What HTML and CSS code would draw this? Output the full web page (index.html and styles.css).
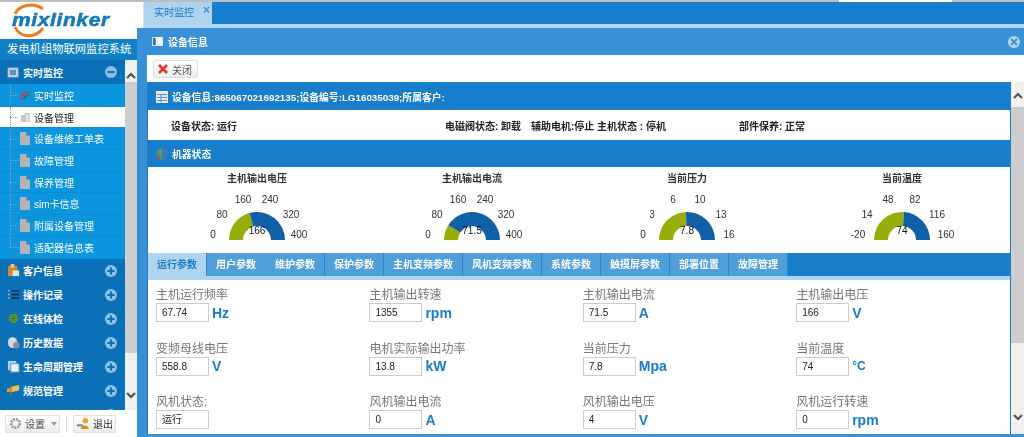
FILE: index.html
```html
<!DOCTYPE html>
<html lang="zh">
<head>
<meta charset="utf-8">
<title>发电机组物联网监控系统</title>
<link rel="stylesheet" href="styles.css">
</head>
<body>
<svg class="defs" width="0" height="0">
  <symbol id="doc" viewBox="0 0 10 13"><path d="M0 0h6.5L10 3.5V13H0z" fill="#b4b4b4"/><path d="M6.5 0L10 3.5H6.5z" fill="#2a7fc0"/></symbol>
  <symbol id="plus" viewBox="0 0 12 12"><circle cx="6" cy="6" r="6" fill="#8cc0e4"/><path d="M2.5 6h7M6 2.5v7" stroke="#0a6fb5" stroke-width="2"/></symbol>
  <symbol id="up" viewBox="0 0 10 7"><path d="M1 6l4-4 4 4" fill="none" stroke="#555" stroke-width="2.2"/></symbol>
  <symbol id="down" viewBox="0 0 10 7"><path d="M1 1l4 4 4-4" fill="none" stroke="#555" stroke-width="2.2"/></symbol>
</svg>
<div class="topline"></div>
<div class="app">
  <aside class="side">
    <div class="logo">
      <svg class="logo-ring" viewBox="0 0 60 37"><path d="M15 12C19 3 33 0 43 7M15 25C20 36 35 37 43 26" fill="none" stroke="#ee7d1e" stroke-width="3"/></svg>
      <span class="logo-text">mixlinker</span>
    </div>
    <div class="sys-title">发电机组物联网监控系统</div>
    <div class="side-mid">
      <nav class="menu">
        <div class="mhead"><svg class="micon" viewBox="0 0 14 14"><rect x="1" y="2" width="11" height="10" fill="#dfe8f0" stroke="#7d99b5"/><rect x="3" y="4" width="7" height="6" fill="#5b8fc0"/></svg><span class="mtext">实时监控</span><svg class="mbtn" viewBox="0 0 12 12"><circle cx="6" cy="6" r="6" fill="#8cc0e4"/><path d="M2.5 6h7" stroke="#0a6fb5" stroke-width="2"/></svg></div>
        <ul class="sub">
          <li class="it"><svg class="ii" viewBox="0 0 12 12"><path d="M1 11C1 5 5 2 11 2" fill="none" stroke="#d33" stroke-width="2"/><path d="M5 11C5 8 7 6 11 6" fill="none" stroke="#2c8f3c" stroke-width="2"/><path d="M3 11L9 5" stroke="#2a5fb0" stroke-width="1.5"/></svg>实时监控</li>
          <li class="it on"><svg class="ii" viewBox="0 0 12 12"><rect x="1" y="3" width="5" height="8" fill="#c4c4c4"/><rect x="6" y="1" width="5" height="10" fill="#e2e2e2" stroke="#999" stroke-width=".6"/></svg>设备管理</li>
          <li class="it"><svg class="ii"><use href="#doc"/></svg>设备维修工单表</li>
          <li class="it"><svg class="ii"><use href="#doc"/></svg>故障管理</li>
          <li class="it"><svg class="ii"><use href="#doc"/></svg>保养管理</li>
          <li class="it"><svg class="ii"><use href="#doc"/></svg>sim卡信息</li>
          <li class="it"><svg class="ii"><use href="#doc"/></svg>附属设备管理</li>
          <li class="it last"><svg class="ii"><use href="#doc"/></svg>适配器信息表</li>
        </ul>
        <div class="mhead"><svg class="micon" viewBox="0 0 14 14"><rect x="1" y="2" width="10" height="11" fill="#c98a3c"/><rect x="4" y="0" width="4" height="4" fill="#e9c98c"/><rect x="6" y="7" width="7" height="6" fill="#e6e6e6"/></svg><span class="mtext">客户信息</span><svg class="mbtn"><use href="#plus"/></svg></div>
        <div class="mhead"><svg class="micon" viewBox="0 0 14 14"><path d="M1 3h2M1 7h2M1 11h2" stroke="#9cc7e8" stroke-width="1.4"/><path d="M5 3h8M5 7h8M5 11h8" stroke="#1a2530" stroke-width="1.4"/></svg><span class="mtext">操作记录</span><svg class="mbtn"><use href="#plus"/></svg></div>
        <div class="mhead"><svg class="micon" viewBox="0 0 14 14"><circle cx="7" cy="7" r="5" fill="#5f9a3c"/><path d="M7 0v14M0 7h14M2 2l10 10M12 2L2 12" stroke="#3f7a2c" stroke-width="1"/></svg><span class="mtext">在线体检</span><svg class="mbtn"><use href="#plus"/></svg></div>
        <div class="mhead"><svg class="micon" viewBox="0 0 14 14"><ellipse cx="6" cy="7" rx="5" ry="6" fill="#d5d9dd"/><circle cx="10" cy="10" r="3.5" fill="#8a9096"/></svg><span class="mtext">历史数据</span><svg class="mbtn"><use href="#plus"/></svg></div>
        <div class="mhead"><svg class="micon" viewBox="0 0 14 14"><rect x="1" y="1" width="9" height="10" fill="#a8cdf0"/><rect x="4" y="4" width="9" height="9" fill="#e8f2fb" stroke="#5d8fc0"/></svg><span class="mtext">生命周期管理</span><svg class="mbtn"><use href="#plus"/></svg></div>
        <div class="mhead"><svg class="micon" viewBox="0 0 14 14"><path d="M4 3l9-2v6L4 9z" fill="#eac04c"/><path d="M4 2v11" stroke="#9a6a20" stroke-width="1.6"/><path d="M0 5l4-1v4L0 9z" fill="#d9a43a"/></svg><span class="mtext">规范管理</span><svg class="mbtn"><use href="#plus"/></svg></div>
        <div class="mhead"><svg class="micon" viewBox="0 0 14 14"><circle cx="7" cy="8" r="5" fill="#eac04c"/></svg><span class="mtext"></span><svg class="mbtn"><use href="#plus"/></svg></div>
      </nav>
      <div class="sb sb-side"><span class="sb-up"><svg class="ar"><use href="#up"/></svg></span><span class="sb-thumb"></span><span class="sb-down"><svg class="ar"><use href="#down"/></svg></span></div>
    </div>
    <footer class="side-foot">
      <button class="fbtn set"><svg class="fi" viewBox="0 0 14 14"><circle cx="7" cy="7" r="4.5" fill="none" stroke="#999" stroke-width="3" stroke-dasharray="2 1"/></svg>设置<i class="caret"></i></button>
      <span class="fsep"></span>
      <button class="fbtn out"><svg class="fi" viewBox="0 0 14 14"><circle cx="9" cy="4" r="3" fill="#eaa92c"/><path d="M4 13c0-5 8-5 9 0z" fill="#e08a2c"/><path d="M0 9h6" stroke="#3a7fc0" stroke-width="2"/></svg>退出</button>
    </footer>
  </aside>

  <main class="main">
    <div class="tabstrip"><div class="pagetab">实时监控<b class="tabx">×</b></div></div>
    <div class="tabband"></div>
    <header class="phead"><svg class="pi" viewBox="0 0 12 10"><rect width="12" height="10" fill="#eef4fa"/><rect x="1" y="1" width="3" height="8" fill="#2a6fb0"/></svg>设备信息<svg class="pclose" viewBox="0 0 12 12"><circle cx="6" cy="6" r="6" fill="#b4d6f0"/><path d="M3 3l6 6M9 3l-6 6" stroke="#3a90d6" stroke-width="1.8"/></svg></header>
    <div class="pbody">
      <div class="toolbar"><button class="closebtn"><svg class="cx" viewBox="0 0 10 10"><path d="M1 1l8 8M9 1L1 9" stroke="#e0352b" stroke-width="2.6"/></svg>关闭</button></div>
      <div class="cwrap">
        <section class="content">
          <h3 class="bar"><svg class="bi" viewBox="0 0 12 12"><rect width="12" height="12" fill="#e4eef8"/><path d="M1 3.5h10M1 6.5h10M1 9.5h10M5 3.5v8" stroke="#5d8fc0"/></svg>设备信息:865067021692135;设备编号:LG16035039;所属客户:</h3>
          <div class="status">
            <span class="s1">设备状态: 运行</span>
            <span class="s2">电磁阀状态: 卸载</span>
            <span class="s3">辅助电机:停止</span>
            <span class="s4">主机状态 : 停机</span>
            <span class="s5">部件保养: 正常</span>
          </div>
          <h3 class="bar"><svg class="bi" viewBox="0 0 12 12"><circle cx="6" cy="6" r="5.5" fill="#5a9a6a"/><path d="M6 1a5 5 0 0 1 0 10z" fill="#3d77c8"/><path d="M0 8l4-1v4z" fill="#d9402f"/></svg>机器状态</h3>
          <div class="gauges">
            <div class="gauge"><svg class="gsvg" viewBox="0 0 215 86">
              <text class="gt" x="107" y="15">主机输出电压</text>
              <path d="M79 73A28 28 0 0 1 99.6 46L103.3 59.5A14 14 0 0 0 93 73Z" fill="#97ae0a"/>
              <path d="M99.6 46A28 28 0 0 1 135 73H121A14 14 0 0 0 103.3 59.5Z" fill="#0f60a8"/>
              <text class="gl" x="63" y="71">0</text><text class="gl" x="72" y="51">80</text><text class="gl" x="93" y="36">160</text><text class="gl" x="120" y="36">240</text><text class="gl" x="141" y="51">320</text><text class="gl" x="149" y="71">400</text><text class="gv" x="107" y="67">166</text>
            </svg></div>
            <div class="gauge"><svg class="gsvg" viewBox="0 0 215 86">
              <text class="gt" x="107" y="15">主机输出电流</text>
              <path d="M79 73A28 28 0 0 1 83.3 58.2L95.2 65.6A14 14 0 0 0 93 73Z" fill="#97ae0a"/>
              <path d="M83.3 58.2A28 28 0 0 1 135 73H121A14 14 0 0 0 95.2 65.6Z" fill="#0f60a8"/>
              <text class="gl" x="63" y="71">0</text><text class="gl" x="72" y="51">80</text><text class="gl" x="93" y="36">160</text><text class="gl" x="120" y="36">240</text><text class="gl" x="141" y="51">320</text><text class="gl" x="149" y="71">400</text><text class="gv" x="107" y="67">71.5</text>
            </svg></div>
            <div class="gauge"><svg class="gsvg" viewBox="0 0 215 86">
              <text class="gt" x="107" y="15">当前压力</text>
              <path d="M79 73A28 28 0 0 1 105.9 45L106.4 59A14 14 0 0 0 93 73Z" fill="#97ae0a"/>
              <path d="M105.9 45A28 28 0 0 1 135 73H121A14 14 0 0 0 106.4 59Z" fill="#0f60a8"/>
              <text class="gl" x="63" y="71">0</text><text class="gl" x="72" y="51">3</text><text class="gl" x="93" y="36">6</text><text class="gl" x="120" y="36">10</text><text class="gl" x="141" y="51">13</text><text class="gl" x="149" y="71">16</text><text class="gv" x="107" y="67">7.8</text>
            </svg></div>
            <div class="gauge"><svg class="gsvg" viewBox="0 0 215 86">
              <text class="gt" x="107" y="15">当前温度</text>
              <path d="M79 73A28 28 0 0 1 109 45.1L108 59A14 14 0 0 0 93 73Z" fill="#97ae0a"/>
              <path d="M109 45.1A28 28 0 0 1 135 73H121A14 14 0 0 0 108 59Z" fill="#0f60a8"/>
              <text class="gl" x="63" y="71">-20</text><text class="gl" x="72" y="51">14</text><text class="gl" x="93" y="36">48</text><text class="gl" x="120" y="36">82</text><text class="gl" x="142" y="51">116</text><text class="gl" x="151" y="71">160</text><text class="gv" x="107" y="67">74</text>
            </svg></div>
          </div>
          <div class="tabs">
            <span class="t active">运行参数</span><span class="t nosep">用户参数</span><span class="t">维护参数</span><span class="t">保护参数</span><span class="t wide">主机变频参数</span><span class="t wide">风机变频参数</span><span class="t">系统参数</span><span class="t mid">触摸屏参数</span><span class="t">部署位置</span><span class="t">故障管理</span>
          </div>
          <div class="band"></div>
          <div class="params">
            <div class="p"><label>主机运行频率</label><div class="vr"><span class="in">67.74</span><b>Hz</b></div></div>
            <div class="p"><label>主机输出转速</label><div class="vr"><span class="in">1355</span><b>rpm</b></div></div>
            <div class="p"><label>主机输出电流</label><div class="vr"><span class="in">71.5</span><b>A</b></div></div>
            <div class="p"><label>主机输出电压</label><div class="vr"><span class="in">166</span><b>V</b></div></div>
            <div class="p"><label>变频母线电压</label><div class="vr"><span class="in">558.8</span><b>V</b></div></div>
            <div class="p"><label>电机实际输出功率</label><div class="vr"><span class="in">13.8</span><b>kW</b></div></div>
            <div class="p"><label>当前压力</label><div class="vr"><span class="in">7.8</span><b>Mpa</b></div></div>
            <div class="p"><label>当前温度</label><div class="vr"><span class="in">74</span><b class="deg">°C</b></div></div>
            <div class="p"><label>风机状态:</label><div class="vr"><span class="in">运行</span></div></div>
            <div class="p"><label>风机输出电流</label><div class="vr"><span class="in">0</span><b>A</b></div></div>
            <div class="p"><label>风机输出电压</label><div class="vr"><span class="in">4</span><b>V</b></div></div>
            <div class="p"><label>风机运行转速</label><div class="vr"><span class="in">0</span><b>rpm</b></div></div>
          </div>
        </section>
        <div class="sb sb-main"><span class="sb-up"><svg class="ar"><use href="#up"/></svg></span><span class="sb-thumb"></span><span class="sb-down"><svg class="ar"><use href="#down"/></svg></span></div>
      </div>
    </div>
  </main>
</div>
</body>
</html>
```
FILE: styles.css
```css
* { box-sizing: border-box; }
html, body { margin: 0; height: 100%; }
body {
  width: 1024px; height: 437px; overflow: hidden; display: flex; flex-direction: column;
  font-family: "Liberation Sans", "Noto Sans CJK SC", sans-serif; font-size: 10px; background: #fff;
}
.defs { position: absolute; }
.topline { height: 2px; flex: none; background: linear-gradient(90deg, #bdbdbd 839px, #fff 839px, #fff 952px, #bdbdbd 952px); }
.app { flex: 1; display: flex; min-height: 0; filter: blur(.4px); }

.side { width: 137px; flex: none; display: flex; flex-direction: column; background: #fff; }
.logo { height: 37px; flex: none; position: relative; padding: 9px 0 0 12px; }
.logo-text { font: italic 700 18px/18px "Liberation Sans", sans-serif; letter-spacing: .5px; color: #1478c0; -webkit-text-stroke: .5px #1478c0; display: block; position: relative; transform: scaleX(1.17); transform-origin: left center; }
.logo-ring { position: absolute; left: 0; top: 0; width: 60px; height: 37px; }
.sys-title { height: 21px; flex: none; background: #0f7fc6; color: #fff; font-size: 11.3px; line-height: 21px; padding-left: 7px; white-space: nowrap; }
.side-mid { flex: 1; display: flex; min-height: 0; }
.menu { width: 125px; flex: none; overflow: hidden; background: #0a70b8; color: #fff; }
.mhead { height: 24px; display: flex; align-items: center; padding: 0 8px 0 7px; font-weight: 700; }
.micon { width: 13px; height: 13px; flex: none; margin-right: 3px; }
.mtext { flex: 1; white-space: nowrap; }
.mbtn { width: 12px; height: 12px; flex: none; }
.sub { list-style: none; margin: 0; padding: 1px 0 0; background: #0a95de; }
.it { height: 21.7px; display: flex; align-items: center; padding-left: 20px; position: relative; border-bottom: 1px solid #0a8cd2; white-space: nowrap; }
.it::before { content: ""; position: absolute; left: 10px; top: 0; bottom: 0; border-left: 1px dotted #9a9a9a; }
.it::after { content: ""; position: absolute; left: 10px; width: 8px; top: 50%; border-top: 1px dotted #9a9a9a; }
.it.last::before { bottom: 50%; }
.it.on { background: #fff; color: #222; }
.ii { width: 10px; height: 13px; flex: none; margin-right: 4px; }
.sb { width: 12px; flex: none; background: #f0f0f0; display: flex; flex-direction: column; align-items: center; }
.sb-up, .sb-down { flex: none; width: 100%; display: flex; justify-content: center; }
.sb-up { height: 22px; align-items: flex-end; padding-bottom: 3px; }
.sb-down { margin-top: auto; height: 30px; align-items: center; }
.ar { width: 10px; height: 7px; }
.sb-thumb { background: #cdcdcd; width: 100%; height: 271px; flex: none; }
.side-foot { height: 27px; flex: none; display: flex; align-items: center; padding-left: 5px; background: #fff; }
.fbtn { height: 18px; padding: 0 3px; border: 1px solid #e2e2e2; background: linear-gradient(#fff, #ececec); font: 10px "Liberation Sans", "Noto Sans CJK SC", sans-serif; color: #555; display: flex; align-items: center; border-radius: 2px; white-space: nowrap; }
.fbtn.set { width: 55px; }
.fbtn.out { width: 43px; color: #333; }
.fi { width: 13px; height: 13px; margin-right: 3px; flex: none; }
.caret { width: 0; height: 0; margin-left: 6px; border: 3px solid transparent; border-top: 4px solid #999; border-bottom: 0; }
.fsep { width: 1px; height: 16px; background: #ddd; margin: 0 6px; }

.main { flex: 1; min-width: 0; display: flex; flex-direction: column; }
.tabstrip { height: 22px; flex: none; margin-left: 6px; background: #187dcb; }
.pagetab { width: 69px; height: 26px; background: #aed4f0; color: #1a7cc8; padding-left: 10px; line-height: 22px; position: relative; font-size: 10px; border-left: 1px solid #cfe4f5; }
.tabx { position: absolute; right: 2px; top: -3px; font-size: 12px; color: #3a90d6; }
.tabband { height: 4px; flex: none; margin-left: 6px; background: #aed4f0; }
.phead { height: 27px; flex: none; background: #3a90d6; color: #fff; font-weight: 700; display: flex; align-items: center; padding: 0 4px 0 15px; }
.pi { width: 11px; height: 9px; margin-right: 5px; }
.pclose { width: 12px; height: 12px; margin-left: auto; }
.pbody { flex: 1; min-height: 0; display: flex; flex-direction: column; border-left: 10px solid #3a90d6; }
.toolbar { height: 27px; flex: none; padding: 5px 6px; background: #fff; }
.closebtn { height: 18px; width: 45px; padding: 0 0 0 4px; border: 1px solid #ddd; border-radius: 2px; background: linear-gradient(#fff, #eee); font: 10px "Liberation Sans", "Noto Sans CJK SC", sans-serif; color: #555; display: flex; align-items: center; }
.cx { width: 10px; height: 10px; margin-right: 4px; }
.cwrap { flex: 1; min-height: 0; display: flex; border-bottom: 3px solid #3a90d6; }
.content { flex: 1; min-width: 0; border: solid #1a7ec9; border-width: 1px 1px 0; overflow: hidden; display: flex; flex-direction: column; background: #fff; }
.bar { height: 27px; flex: none; margin: 0; background: #187dcb; color: #fff; font-size: 9.8px; font-weight: 700; display: flex; align-items: center; padding-left: 8px; white-space: nowrap; }
.bi { width: 12px; height: 12px; margin-right: 4px; flex: none; }
.status { height: 30px; flex: none; display: flex; align-items: center; font-weight: 700; color: #222; white-space: nowrap; padding-left: 23px; }
.s1 { width: 274px; }
.s2 { width: 86px; }
.s3 { width: 66px; }
.s4 { width: 142px; }
.gauges { height: 86px; flex: none; display: flex; padding-left: 2px; }
.gauge { width: 215px; flex: none; }
.gsvg { width: 215px; height: 86px; display: block; }
.gt { font: 700 10px "Liberation Sans", "Noto Sans CJK SC", sans-serif; fill: #333; text-anchor: middle; }
.gl { font: 10px "Liberation Sans", sans-serif; fill: #333; text-anchor: middle; }
.gv { font: 10px "Liberation Sans", sans-serif; fill: #111; text-anchor: middle; }
.tabs { height: 23px; flex: none; display: flex; background: #187dcb; }
.t { width: 59px; flex: none; background: #4f9fdb; color: #fff; font-weight: 700; font-size: 10px; text-align: center; line-height: 23px; border-right: 1px solid #2a85cc; }
.t.nosep { border-right-color: #4f9fdb; }
.t.active { background: #aed4f0; color: #1a7cc8; }
.t.wide { width: 79px; }
.t.mid { width: 69px; }
.band { height: 4px; flex: none; background: #aed4f0; }
.params { flex: 1; min-height: 0; padding: 8px 0 0 8px; display: grid; grid-template-columns: repeat(4, 213.4px); grid-auto-rows: 53.5px; }
.p label { display: block; font-size: 12px; line-height: 14px; height: 15px; color: #777; white-space: nowrap; }
.vr { display: flex; align-items: center; }
.in { width: 53px; height: 19px; border: 1px solid #ccc; font-size: 10px; line-height: 17px; padding-left: 5px; color: #222; background: #fff; }
.vr b { margin-left: 3px; font-size: 14px; color: #1a7cc8; }
.vr b.deg { font-size: 12px; }
.sb-main { width: 13px; }
.sb-main .sb-up { height: 25px; padding-bottom: 8px; }
.sb-main .sb-thumb { height: 236px; }
.sb-main .sb-down { padding-bottom: 3px; }
```
